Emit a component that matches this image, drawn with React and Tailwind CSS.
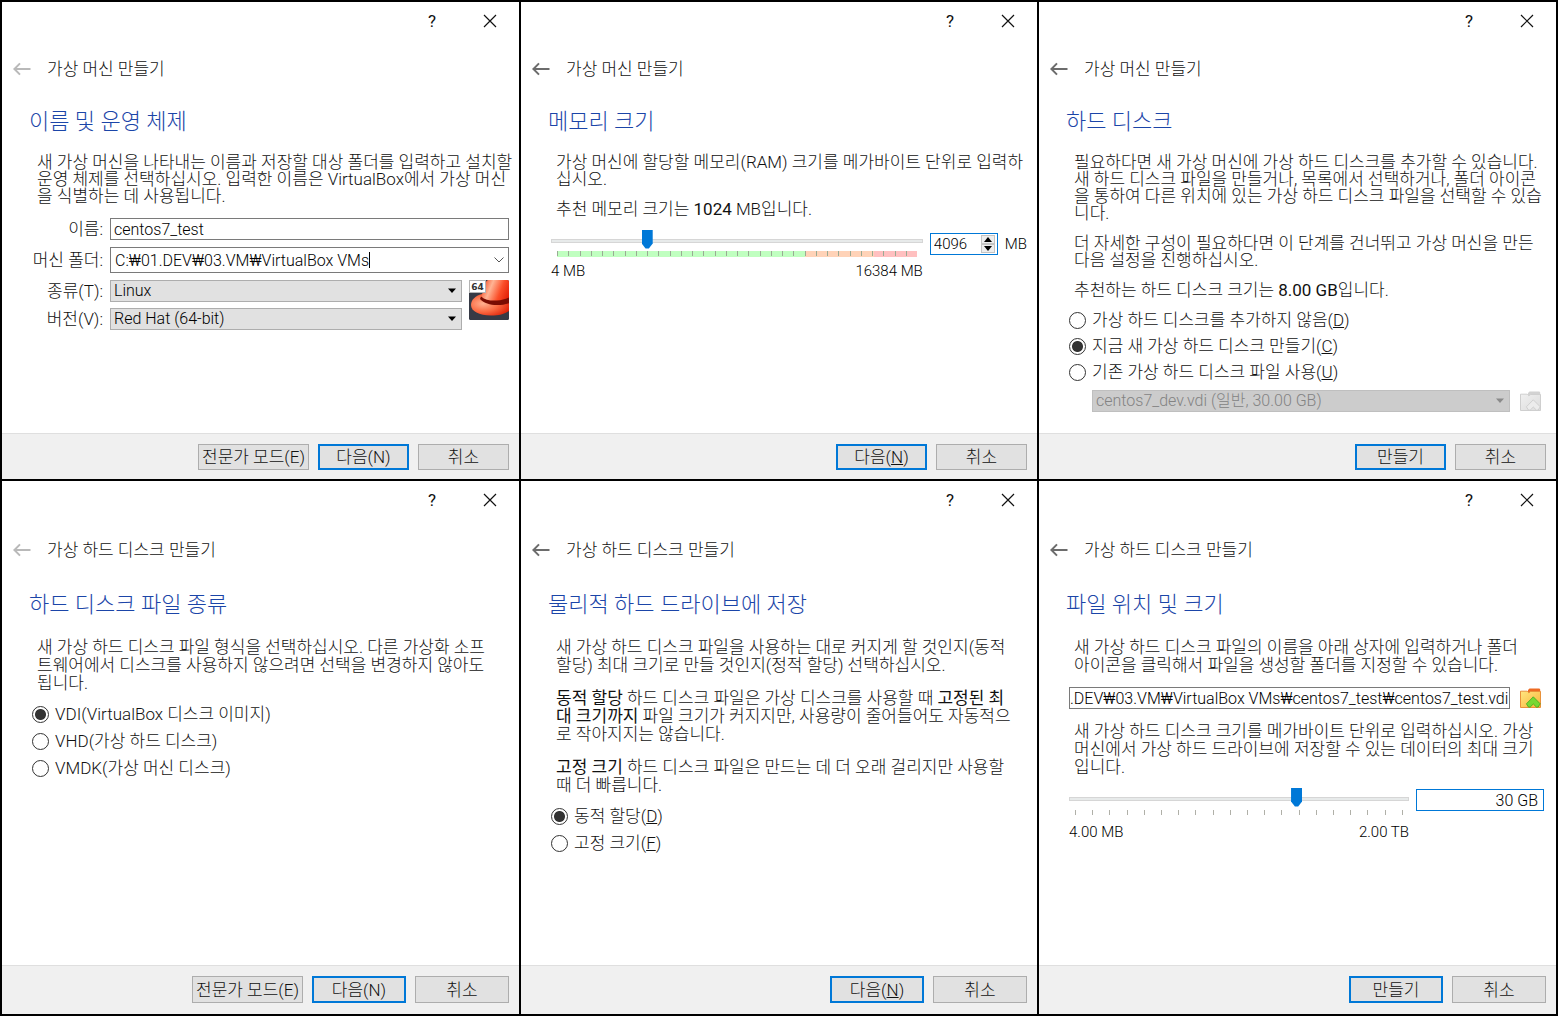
import React from 'react'

const field = 'border border-[#7a7a7a] bg-white text-[16px] text-black outline-none'

function BackArrow() {
    return (
        <svg className="h-3.5 w-[18px]" viewBox="0 0 18 14" fill="none" stroke="currentColor" strokeWidth="2">
            <path d="M17.5 7H1.5M7 1.4L1.4 7 7 12.6" />
        </svg>
    )
}

function CloseIcon() {
    return (
        <svg className="h-3.5 w-3.5" viewBox="0 0 14 14" fill="none" stroke="#111" strokeWidth="1.2">
            <path d="M1 1l12 12M13 1L1 13" />
        </svg>
    )
}

function FolderIcon({ disabled }) {
    const id = disabled ? 'folder-off' : 'folder-on'
    const back = disabled ? '#d2d2d2' : '#ee6a22'
    const light = disabled ? '#f0f0f0' : '#ffe680'
    const dark = disabled ? '#dcdcdc' : '#f9b43a'
    const edge = disabled ? '#cfcfcf' : '#e8913a'
    return (
        <svg className="h-5 w-[21px]" viewBox="0 0 21 20">
            <defs>
                <linearGradient id={id} x1="0" y1="0" x2="1" y2="1">
                    <stop offset="0" stopColor={light} />
                    <stop offset="1" stopColor={dark} />
                </linearGradient>
            </defs>
            <path d="M9.5.5h9c1 0 1.7.5 1.7 1.3V6H8V2z" fill={back} />
            <path d="M.5 3.2h6.8l1.5 1.6 1.8-1.3h9.9v16H.5z" fill={`url(#${id})`} stroke={edge} />
            <path
                d="M13.3 8.8l6.9 7-2 3.2-1.7.2-3.2-3.2-3.2 3.2-1.7-.2-2-3.2z"
                fill={disabled ? '#ececec' : '#76d834'}
                stroke={disabled ? '#c9c9c9' : '#3fa81c'}
                strokeWidth=".8"
                strokeLinejoin="round"
            />
        </svg>
    )
}

function RedHatIcon() {
    return (
        <svg className="h-10 w-10" viewBox="0 0 40 40">
            <defs>
                <linearGradient id="crown" x1="0" y1=".3" x2="1" y2=".6">
                    <stop offset="0" stopColor="#f4522c" />
                    <stop offset=".3" stopColor="#ffb494" />
                    <stop offset=".65" stopColor="#fb4e28" />
                    <stop offset="1" stopColor="#e01c04" />
                </linearGradient>
                <radialGradient id="brim" cx=".3" cy=".45" r=".75">
                    <stop offset="0" stopColor="#ffb090" />
                    <stop offset=".5" stopColor="#fa6a42" />
                    <stop offset="1" stopColor="#dc1a02" />
                </radialGradient>
                <clipPath id="tile">
                    <rect width="40" height="40" rx="1.5" />
                </clipPath>
            </defs>
            <g clipPath="url(#tile)">
                <rect width="40" height="40" fill="#363a45" />
                <path d="M13 14C6 16 2 20 2 25c0 6 8 10.500 20 10.500 9 0 15-2 20-6V14z" fill="url(#brim)" />
                <path d="M12.500 18C14 10 15 2 19 0h23v18c-8 5-23 5-29.500 0z" fill="url(#crown)" />
                <path d="M12 16.500c4 3.500 10 4.500 16 4 5-.3 9-1.500 14-4v6c-5 2-9 2.500-14 2.500-7 0-13-2-17-6z" fill="#7a0c02" />
            </g>
            <rect x=".5" y=".5" width="16" height="12" fill="#fff" stroke="#b4b4b4" />
            <text x="8.500" y="10" textAnchor="middle" fontSize="9" fontWeight="700" fontFamily="DejaVu Sans, sans-serif" fill="#333">64</text>
        </svg>
    )
}

function Button({ primary, tall, children }) {
    return (
        <button
            className={`${tall ? 'h-[27px] min-w-[94px]' : 'h-[26px] min-w-[91px]'} bg-[#e1e1e1] px-[3px] whitespace-nowrap ${
                primary ? 'border-2 border-[#0078d7]' : 'border border-[#adadad]'
            }`}
        >
            {children}
        </button>
    )
}

function Dialog({ name, title, first, tall, buttons, children }) {
    return (
        <section className={`flex min-w-0 flex-col bg-white text-[17px] ${tall ? 'leading-[18px]' : 'leading-[17px]'}`}>
            <div className="flex h-[38px] justify-end">
                <button aria-label="도움말" className="w-[58px] font-normal">?</button>
                <button aria-label="닫기" className="flex w-[58px] items-center justify-center"><CloseIcon /></button>
            </div>
            <header className={`flex items-center gap-4 pl-[11px] ${tall ? 'h-[62px]' : 'h-[58px]'}`}>
                <button aria-label="뒤로" disabled={first} className={first ? 'text-[#b9b9b9]' : 'text-[#6c6c6c]'}>
                    <BackArrow />
                </button>
                <span>{name}</span>
            </header>
            <h2 className="mt-2 pl-[27px] text-[22px] leading-8 font-light text-[#1b45a8]">{title}</h2>
            <div className={`flex flex-1 flex-col gap-[13px] pr-2.5 pl-[30px] ${tall ? 'pt-[17px]' : 'pt-4'}`}>{children}</div>
            <footer className={`flex justify-end gap-[9px] border-t border-[#dfdfdf] bg-[#f0f0f0] pt-2.5 pr-2.5 ${tall ? 'h-[49px]' : 'h-[46px]'}`}>
                {buttons}
            </footer>
        </section>
    )
}

// each entry of lines is one line of the paragraph
function Text({ lines }) {
    return (
        <p className="pl-[5px] whitespace-nowrap">
            {lines.map((line, i) => (
                <span key={i} className="block">{line}</span>
            ))}
        </p>
    )
}

function Radio({ group, checked, children }) {
    return (
        <label className="flex items-center gap-1.5">
            <input
                type="radio"
                name={group}
                defaultChecked={checked}
                className="h-[17px] w-[17px] appearance-none rounded-full border border-[#333] bg-white checked:bg-[radial-gradient(circle,#333_0_5px,#fff_6px)]"
            />
            <span>{children}</span>
        </label>
    )
}

function Select({ id, value, disabled, label }) {
    return (
        <div className="relative min-w-0 flex-1">
            <select
                id={id}
                aria-label={label}
                disabled={disabled}
                className={`block h-[22px] w-full appearance-none border px-[3px] text-[16px] leading-5 ${
                    disabled ? 'border-[#bfbfbf] bg-[#cccccc] text-[#838383] opacity-100' : 'border-[#adadad] bg-[#e1e1e1] text-black'
                }`}
            >
                <option>{value}</option>
            </select>
            <svg className="pointer-events-none absolute top-2 right-1.5 h-1.5 w-2" viewBox="0 0 8 6">
                <path d="M0 .5h8L4 5z" fill={disabled ? '#8a8a8a' : '#000'} />
            </svg>
        </div>
    )
}

function Slider({ label, max, value }) {
    return (
        <input
            type="range"
            aria-label={label}
            min="0"
            max={max}
            defaultValue={value}
            className="block h-[19px] w-full appearance-none bg-transparent [&::-webkit-slider-runnable-track]:h-1 [&::-webkit-slider-runnable-track]:border [&::-webkit-slider-runnable-track]:border-[#d6d6d6] [&::-webkit-slider-runnable-track]:bg-[#e7eaea] [&::-webkit-slider-thumb]:-mt-2.5 [&::-webkit-slider-thumb]:h-[19px] [&::-webkit-slider-thumb]:w-[11px] [&::-webkit-slider-thumb]:appearance-none [&::-webkit-slider-thumb]:bg-[#0078d7] [&::-webkit-slider-thumb]:[clip-path:polygon(0_0,100%_0,100%_74%,65%_100%,35%_100%,0_74%)]"
        />
    )
}

function Range({ from, to }) {
    return (
        <div className="flex justify-between text-[15px] text-black">
            <span>{from}</span>
            <span>{to}</span>
        </div>
    )
}

function NameAndSystem() {
    return (
        <Dialog
            name="가상 머신 만들기"
            title="이름 및 운영 체제"
            first
            buttons={<><Button>전문가 모드(E)</Button><Button primary>다음(N)</Button><Button>취소</Button></>}
        >
            <Text
                lines={[
                    '새 가상 머신을 나타내는 이름과 저장할 대상 폴더를 입력하고 설치할',
                    '운영 체제를 선택하십시오. 입력한 이름은 VirtualBox에서 가상 머신',
                    '을 식별하는 데 사용됩니다.',
                ]}
            />
            <div className="grid grid-cols-[71px_1fr] items-center gap-[7px] whitespace-nowrap">
                <label htmlFor="name" className="text-right">이름:</label>
                <input id="name" defaultValue="centos7_test" className={`${field} h-[22px] w-full px-[3px]`} />
                <label htmlFor="folder" className="text-right">머신 폴더:</label>
                <div className={`${field} flex h-[26px] items-center pl-1`}>
                    <input id="folder" defaultValue="C:₩01.DEV₩03.VM₩VirtualBox VMs" className="field-sizing-content outline-none" />
                    <span className="h-4 w-px bg-black" />
                    <button aria-label="폴더 선택" className="mr-1 ml-auto">
                        <svg className="h-1.5 w-2.5" viewBox="0 0 10 6" fill="none" stroke="#555">
                            <path d="M.5.5L5 5 9.5.5" />
                        </svg>
                    </button>
                </div>
                <div className="col-span-2 flex gap-[7px]">
                    <div className="grid flex-1 grid-cols-[71px_1fr] items-center gap-x-[7px] gap-y-1.5">
                        <label htmlFor="type" className="text-right">종류(T):</label>
                        <Select id="type" value="Linux" />
                        <label htmlFor="version" className="text-right">버전(V):</label>
                        <Select id="version" value="Red Hat (64-bit)" />
                    </div>
                    <RedHatIcon />
                </div>
            </div>
        </Dialog>
    )
}

function MemorySize() {
    return (
        <Dialog
            name="가상 머신 만들기"
            title="메모리 크기"
            buttons={<><Button primary>다음(<u>N</u>)</Button><Button>취소</Button></>}
        >
            <Text lines={['가상 머신에 할당할 메모리(RAM) 크기를 메가바이트 단위로 입력하', '십시오.']} />
            <Text lines={[<>추천 메모리 크기는 <b>1024</b> MB입니다.</>]} />
            <div className="flex items-start gap-[7px]">
                <div className="flex-1">
                    <Slider label="메모리 크기" max="16384" value="4096" />
                    <div className="mx-1.5 mt-px mb-1.5 flex h-1.5 bg-[linear-gradient(to_right,#c0ffc0_0_69%,#ffd3b8_69%_88%,#ffc0c0_88%)]">
                        {Array.from({ length: 32 }, (_, i) => (
                            <i key={i} className="h-[5px] flex-1 border-l border-[#9aab94]" />
                        ))}
                    </div>
                    <Range from="4 MB" to="16384 MB" />
                </div>
                <div className="mt-0.5 flex items-center gap-[7px]">
                    <div className="flex h-[22px] w-[68px] items-center border border-[#0078d7] bg-white pr-0.5">
                        <input aria-label="메모리 (MB)" defaultValue="4096" className="w-full min-w-0 pl-[3px] text-[15px] text-black outline-none" />
                        <div className="flex flex-col">
                            <button aria-label="늘리기" className="flex h-[9px] w-3.5 items-center justify-center border border-[#c4c4c4] bg-[#eee]">
                                <svg className="h-[5px] w-2" viewBox="0 0 8 5"><path d="M0 5h8L4 0z" /></svg>
                            </button>
                            <button aria-label="줄이기" className="flex h-[9px] w-3.5 items-center justify-center border border-[#c4c4c4] bg-[#eee]">
                                <svg className="h-[5px] w-2" viewBox="0 0 8 5"><path d="M0 0h8L4 5z" /></svg>
                            </button>
                        </div>
                    </div>
                    <span className="text-[15px] text-black">MB</span>
                </div>
            </div>
        </Dialog>
    )
}

function HardDisk() {
    return (
        <Dialog
            name="가상 머신 만들기"
            title="하드 디스크"
            buttons={<><Button primary>만들기</Button><Button>취소</Button></>}
        >
            <Text
                lines={[
                    '필요하다면 새 가상 머신에 가상 하드 디스크를 추가할 수 있습니다.',
                    '새 하드 디스크 파일을 만들거나, 목록에서 선택하거나, 폴더 아이콘',
                    '을 통하여 다른 위치에 있는 가상 하드 디스크 파일을 선택할 수 있습',
                    '니다.',
                ]}
            />
            <Text lines={['더 자세한 구성이 필요하다면 이 단계를 건너뛰고 가상 머신을 만든', '다음 설정을 진행하십시오.']} />
            <Text lines={[<>추천하는 하드 디스크 크기는 <b>8.00 GB</b>입니다.</>]} />
            <div className="flex flex-col gap-[9px]">
                <Radio group="disk">가상 하드 디스크를 추가하지 않음(<u>D</u>)</Radio>
                <Radio group="disk" checked>지금 새 가상 하드 디스크 만들기(<u>C</u>)</Radio>
                <Radio group="disk">기존 가상 하드 디스크 파일 사용(<u>U</u>)</Radio>
                <div className="flex items-center gap-2.5 pr-[5px] pl-[23px]">
                    <Select label="가상 하드 디스크 파일" value="centos7_dev.vdi (일반, 30.00 GB)" disabled />
                    <button aria-label="파일 선택" disabled><FolderIcon disabled /></button>
                </div>
            </div>
        </Dialog>
    )
}

function FileType() {
    return (
        <Dialog
            name="가상 하드 디스크 만들기"
            title="하드 디스크 파일 종류"
            first
            tall
            buttons={<><Button tall>전문가 모드(E)</Button><Button tall primary>다음(N)</Button><Button tall>취소</Button></>}
        >
            <Text
                lines={[
                    '새 가상 하드 디스크 파일 형식을 선택하십시오. 다른 가상화 소프',
                    '트웨어에서 디스크를 사용하지 않으려면 선택을 변경하지 않아도',
                    '됩니다.',
                ]}
            />
            <div className="flex flex-col gap-[9px]">
                <Radio group="format" checked>VDI(VirtualBox 디스크 이미지)</Radio>
                <Radio group="format">VHD(가상 하드 디스크)</Radio>
                <Radio group="format">VMDK(가상 머신 디스크)</Radio>
            </div>
        </Dialog>
    )
}

function Storage() {
    return (
        <Dialog
            name="가상 하드 디스크 만들기"
            title="물리적 하드 드라이브에 저장"
            tall
            buttons={<><Button tall primary>다음(<u>N</u>)</Button><Button tall>취소</Button></>}
        >
            <div className="flex flex-col gap-[15px]">
                <Text
                    lines={[
                        '새 가상 하드 디스크 파일을 사용하는 대로 커지게 할 것인지(동적',
                        '할당) 최대 크기로 만들 것인지(정적 할당) 선택하십시오.',
                    ]}
                />
                <Text
                    lines={[
                        <><b>동적 할당</b> 하드 디스크 파일은 가상 디스크를 사용할 때 <b>고정된 최</b></>,
                        <><b>대 크기까지</b> 파일 크기가 커지지만, 사용량이 줄어들어도 자동적으</>,
                        '로 작아지지는 않습니다.',
                    ]}
                />
                <Text
                    lines={[
                        <><b>고정 크기</b> 하드 디스크 파일은 만드는 데 더 오래 걸리지만 사용할</>,
                        '때 더 빠릅니다.',
                    ]}
                />
            </div>
            <div className="flex flex-col gap-[9px]">
                <Radio group="alloc" checked>동적 할당(<u>D</u>)</Radio>
                <Radio group="alloc">고정 크기(<u>F</u>)</Radio>
            </div>
        </Dialog>
    )
}

function FileLocation() {
    return (
        <Dialog
            name="가상 하드 디스크 만들기"
            title="파일 위치 및 크기"
            tall
            buttons={<><Button tall primary>만들기</Button><Button tall>취소</Button></>}
        >
            <Text
                lines={[
                    '새 가상 하드 디스크 파일의 이름을 아래 상자에 입력하거나 폴더',
                    '아이콘을 클릭해서 파일을 생성할 폴더를 지정할 수 있습니다.',
                ]}
            />
            <div className="flex items-center gap-2.5 pr-[5px]">
                <input
                    aria-label="파일 위치"
                    defaultValue=".DEV₩03.VM₩VirtualBox VMs₩centos7_test₩centos7_test.vdi"
                    className={`${field} h-[22px] min-w-0 flex-1`}
                />
                <button aria-label="폴더 선택"><FolderIcon /></button>
            </div>
            <Text
                lines={[
                    '새 가상 하드 디스크 크기를 메가바이트 단위로 입력하십시오. 가상',
                    '머신에서 가상 하드 드라이브에 저장할 수 있는 데이터의 최대 크기',
                    '입니다.',
                ]}
            />
            <div className="flex items-start gap-[7px] pr-0.5">
                <div className="flex-1">
                    <Slider label="디스크 크기" max="1000" value="676" />
                    <div className="mx-1.5 mt-0.5 mb-2 flex justify-between">
                        {Array.from({ length: 20 }, (_, i) => (
                            <i key={i} className="h-[5px] w-px bg-[#b0b0a8]" />
                        ))}
                    </div>
                    <Range from="4.00 MB" to="2.00 TB" />
                </div>
                <input
                    aria-label="디스크 크기 값"
                    defaultValue="30 GB"
                    className="h-[22px] w-32 border border-[#0078d7] pr-[5px] text-right text-[16px] text-black outline-none"
                />
            </div>
        </Dialog>
    )
}

export default function App() {
    return (
        <main
            lang="ko"
            className='grid min-h-screen grid-cols-[517fr_516fr_517fr] grid-rows-[477fr_533fr] gap-0.5 bg-black p-0.5 font-["Roboto","Noto_Sans_CJK_KR",sans-serif] font-light text-[#111]'
        >
            <NameAndSystem />
            <MemorySize />
            <HardDisk />
            <FileType />
            <Storage />
            <FileLocation />
        </main>
    )
}
